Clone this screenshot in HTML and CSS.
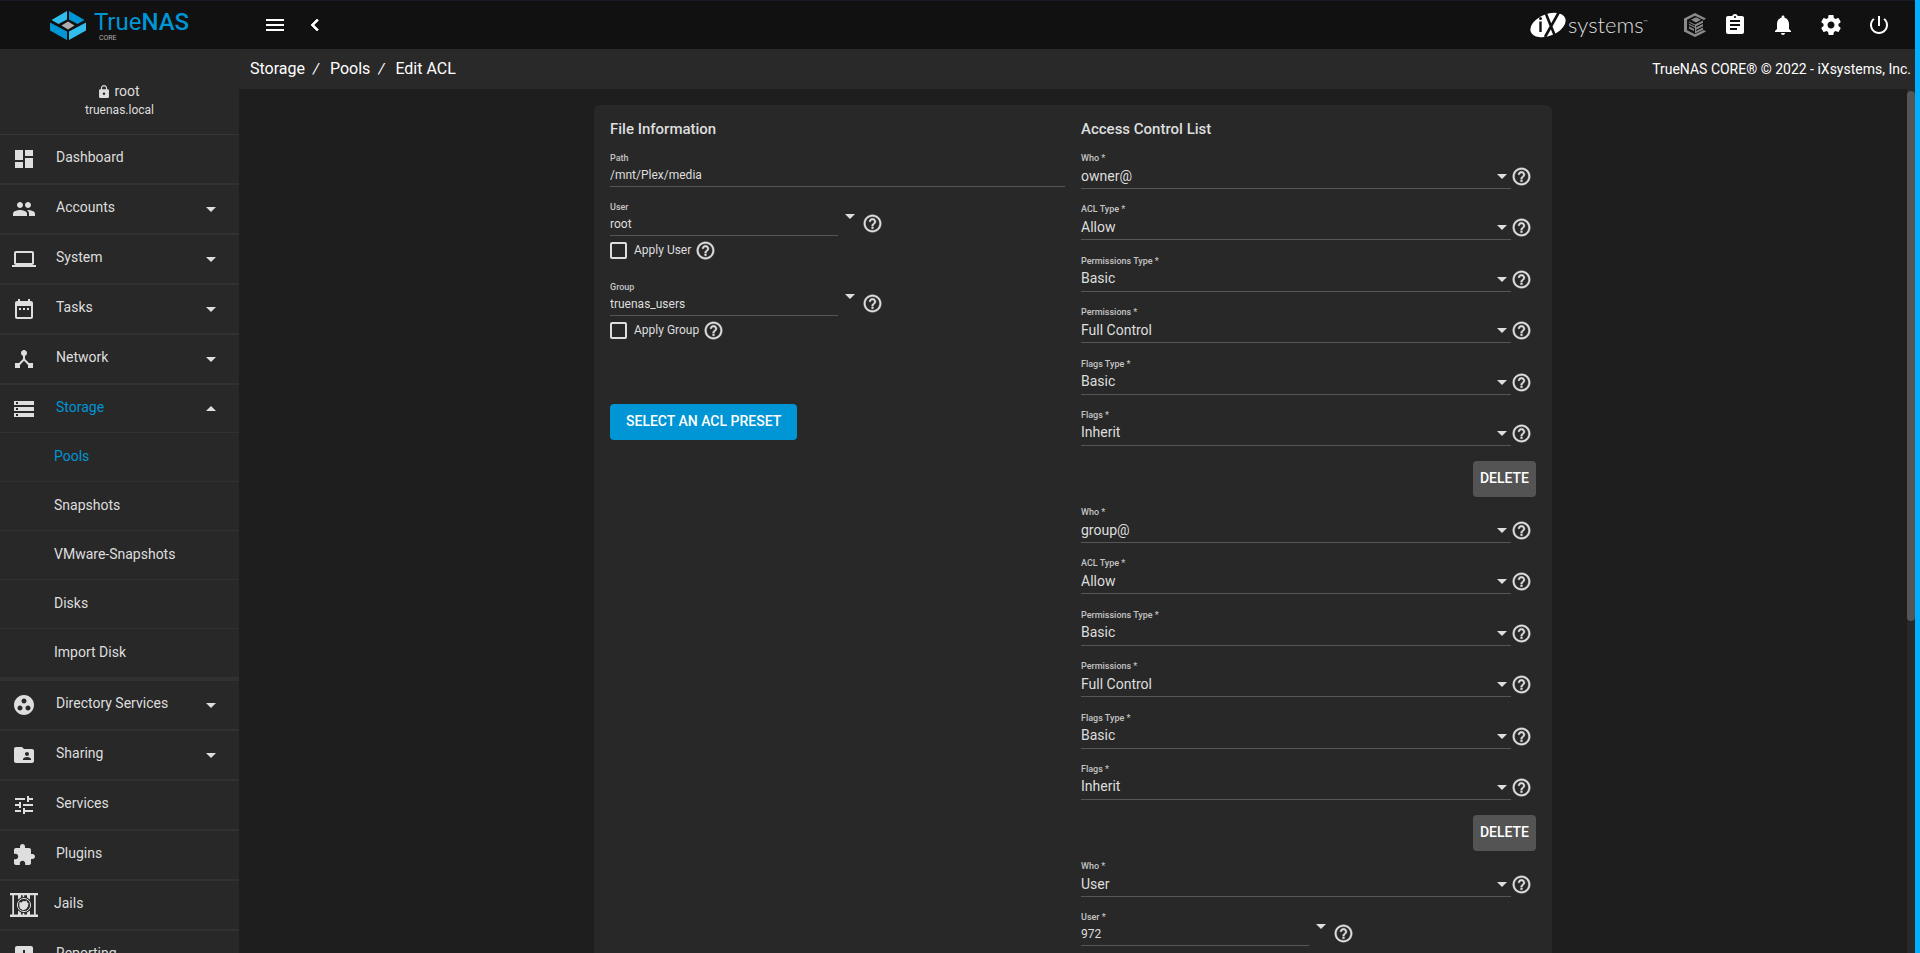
FILE: index.html
```html
<!DOCTYPE html>
<html lang="en">
<head>
<meta charset="utf-8">
<title>TrueNAS - Edit ACL</title>
<link rel="stylesheet" href="styles.css">
</head>
<body>
<svg class="sprite" aria-hidden="true">
  <symbol id="i-menu" viewBox="0 0 24 24"><path d="M3 18h18v-2H3v2zm0-5h18v-2H3v2zm0-7v2h18V6H3z"/></symbol>
  <symbol id="i-left" viewBox="0 0 24 24"><path d="M15.4 7.4 14 6l-6 6 6 6 1.4-1.4-4.6-4.6z" stroke="currentColor" stroke-width=".8"/></symbol>
  <symbol id="i-down" viewBox="7 10 10 5"><path d="M7 10l5 5 5-5z"/></symbol>
  <symbol id="i-up" viewBox="7 9 10 5"><path d="M7 14l5-5 5 5z"/></symbol>
  <symbol id="i-help" viewBox="0 0 24 24"><path d="M11 18h2v-2h-2v2zm1-16C6.480 2 2 6.480 2 12s4.480 10 10 10 10-4.480 10-10S17.520 2 12 2zm0 18c-4.410 0-8-3.590-8-8s3.590-8 8-8 8 3.590 8 8-3.590 8-8 8zm0-14c-2.210 0-4 1.790-4 4h2c0-1.100.9-2 2-2s2 .9 2 2c0 2-3 1.750-3 5h2c0-2.250 3-2.500 3-5 0-2.210-1.790-4-4-4z" stroke="currentColor" stroke-width=".4"/></symbol>
  <symbol id="i-lock" viewBox="4 1 16 21"><path d="M18 8h-1V6c0-2.760-2.240-5-5-5S7 3.240 7 6v2H6c-1.100 0-2 .9-2 2v10c0 1.100.9 2 2 2h12c1.100 0 2-.9 2-2V10c0-1.100-.9-2-2-2zm-6 9c-1.100 0-2-.9-2-2s.9-2 2-2 2 .9 2 2-.9 2-2 2zm3.100-9H8.900V6c0-1.710 1.390-3.100 3.100-3.100s3.100 1.390 3.100 3.100v2z"/></symbol>
  <symbol id="i-dashboard" viewBox="0 0 24 24"><path d="M3 13h8V3H3v10zm0 8h8v-6H3v6zm10 0h8V11h-8v10zm0-18v6h8V3h-8z"/></symbol>
  <symbol id="i-people" viewBox="0 0 24 24"><path d="M16 11c1.660 0 2.990-1.340 2.990-3S17.660 5 16 5s-3 1.340-3 3 1.340 3 3 3zm-8 0c1.660 0 2.990-1.340 2.990-3S9.660 5 8 5 5 6.340 5 8s1.340 3 3 3zm0 2c-2.330 0-7 1.170-7 3.500V19h14v-2.500c0-2.330-4.670-3.500-7-3.500zm8 0c-.29 0-.62.020-.97.050 1.160.84 1.970 1.970 1.970 3.450V19h6v-2.500c0-2.330-4.670-3.500-7-3.500z"/></symbol>
  <symbol id="i-laptop" viewBox="0 0 24 24"><path d="M20 18c1.100 0 2-.9 2-2V6c0-1.100-.9-2-2-2H4c-1.100 0-2 .9-2 2v10c0 1.100.9 2 2 2H0v2h24v-2h-4zM4 6h16v10H4V6z"/></symbol>
  <symbol id="i-tasks" viewBox="0 0 24 24"><path d="M9 11H7v2h2v-2zm4 0h-2v2h2v-2zm4 0h-2v2h2v-2zm2-7h-1V2h-2v2H8V2H6v2H5c-1.110 0-2 .9-2 2v14c0 1.100.89 2 2 2h14c1.100 0 2-.9 2-2V6c0-1.100-.9-2-2-2zm0 16H5V9h14v11z"/></symbol>
  <symbol id="i-network" viewBox="0 0 24 24"><path d="M17 16l-4-4V8.820C14.160 8.400 15 7.300 15 6c0-1.660-1.340-3-3-3S9 4.340 9 6c0 1.300.84 2.400 2 2.820V12l-4 4H3v5h5v-3.050l4-4.200 4 4.200V21h5v-5h-4z"/></symbol>
  <symbol id="i-storage" viewBox="0 0 24 24"><path d="M2 20h20v-4H2v4zm2-3h2v2H4v-2zM2 4v4h20V4H2zm4 3H4V5h2v2zm-4 7h20v-4H2v4zm2-3h2v2H4v-2z"/></symbol>
  <symbol id="i-directory" viewBox="0 0 24 24"><path d="M12 2C6.480 2 2 6.480 2 12s4.480 10 10 10 10-4.480 10-10S17.520 2 12 2zM8 17.500c-1.380 0-2.500-1.120-2.500-2.500s1.120-2.500 2.500-2.500 2.500 1.120 2.500 2.500-1.120 2.500-2.500 2.500zM9.500 8c0-1.380 1.120-2.500 2.500-2.500s2.500 1.120 2.500 2.500-1.120 2.500-2.500 2.500S9.500 9.380 9.500 8zm6.500 9.500c-1.380 0-2.500-1.120-2.500-2.500s1.120-2.500 2.500-2.500 2.500 1.120 2.500 2.500-1.120 2.500-2.500 2.500z"/></symbol>
  <symbol id="i-sharing" viewBox="0 0 24 24"><path d="M20 6h-8l-2-2H4c-1.100 0-1.990.9-1.990 2L2 18c0 1.100.9 2 2 2h16c1.100 0 2-.9 2-2V8c0-1.100-.9-2-2-2zm-5 3c1.100 0 2 .9 2 2s-.9 2-2 2-2-.9-2-2 .9-2 2-2zm4 8h-8v-1c0-1.330 2.670-2 4-2s4 .67 4 2v1z"/></symbol>
  <symbol id="i-services" viewBox="0 0 24 24"><path d="M3 17v2h6v-2H3zM3 5v2h10V5H3zm10 16v-2h8v-2h-8v-2h-2v6h2zM7 9v2H3v2h4v2h2V9H7zm14 4v-2H11v2h10zm-6-4h2V7h4V5h-4V3h-2v6z"/></symbol>
  <symbol id="i-plugins" viewBox="0 0 24 24"><path d="M20.500 11H19V7c0-1.100-.9-2-2-2h-4V3.500C13 2.120 11.880 1 10.500 1S8 2.120 8 3.500V5H4c-1.100 0-1.990.9-1.990 2v3.800H3.500c1.490 0 2.700 1.210 2.700 2.700s-1.210 2.700-2.700 2.700H2V20c0 1.100.9 2 2 2h3.800v-1.500c0-1.490 1.210-2.700 2.700-2.700 1.490 0 2.700 1.210 2.700 2.700V22H17c1.100 0 2-.9 2-2v-4h1.500c1.380 0 2.500-1.120 2.500-2.500S21.880 11 20.500 11z"/></symbol>
  <symbol id="i-jails" viewBox="0 0 28 24"><path d="M0 0h28v2.200H0zM0 21.600h28V24H0zM2.300 2.200H4v19.400H2.300zM8 2.200h3v19.400H8zM17 2.200h3v19.400h-3zM24 2.200h1.700v19.400H24zM12.700 2.200h1.500v19.400h-1.500z"/><circle cx="14" cy="12" r="8" fill="#282828"/><circle cx="14" cy="12" r="6.600" fill="none" stroke="currentColor" stroke-width="1"/><path d="M9.500 9l2 .4L13 8l2.500.3 1-1 .6 2.200 1.400.5-.5 3.500-2 2.800-3 .9-3-1.700-.8-3z"/></symbol>
  <symbol id="i-report" viewBox="0 0 24 24"><path d="M19 3H5c-1.100 0-2 .9-2 2v14c0 1.100.9 2 2 2h14c1.100 0 2-.9 2-2V5c0-1.100-.9-2-2-2zM9 17H7v-7h2v7zm4 0h-2V7h2v10zm4 0h-2v-4h2v4z"/></symbol>
  <symbol id="i-clipboard" viewBox="0 0 24 24"><path d="M19 3h-4.180C14.400 1.840 13.300 1 12 1c-1.300 0-2.400.84-2.820 2H5c-1.100 0-2 .9-2 2v14c0 1.100.9 2 2 2h14c1.100 0 2-.9 2-2V5c0-1.100-.9-2-2-2zm-7 0c.55 0 1 .45 1 1s-.45 1-1 1-1-.45-1-1 .45-1 1-1zm2 14H7v-2h7v2zm3-4H7v-2h10v2zm0-4H7V7h10v2z"/></symbol>
  <symbol id="i-bell" viewBox="0 0 24 24"><path d="M12 22c1.100 0 2-.9 2-2h-4c0 1.100.89 2 2 2zm6-6v-5c0-3.070-1.640-5.640-4.500-6.320V4c0-.83-.67-1.500-1.500-1.500s-1.500.67-1.500 1.500v.68C7.630 5.360 6 7.920 6 11v5l-2 2v1h16v-1l-2-2z"/></symbol>
  <symbol id="i-gear" viewBox="0 0 24 24"><path d="M19.430 12.980c.04-.32.070-.64.070-.98s-.03-.66-.07-.98l2.110-1.650c.19-.15.24-.42.12-.64l-2-3.460c-.12-.22-.39-.3-.61-.22l-2.490 1c-.52-.4-1.080-.73-1.690-.98l-.38-2.650C14.460 2.180 14.250 2 14 2h-4c-.25 0-.46.18-.49.42l-.38 2.650c-.61.25-1.170.59-1.690.98l-2.490-1c-.23-.09-.49 0-.61.22l-2 3.460c-.13.22-.07.49.12.64l2.110 1.650c-.04.32-.07.65-.07.98s.03.66.07.98l-2.110 1.650c-.19.15-.24.42-.12.64l2 3.460c.12.22.39.3.61.22l2.490-1c.52.4 1.080.73 1.690.98l.38 2.650c.03.24.24.42.49.42h4c.25 0 .46-.18.49-.42l.38-2.650c.61-.25 1.170-.59 1.690-.98l2.490 1c.23.09.49 0 .61-.22l2-3.460c.12-.22.07-.49-.12-.64l-2.110-1.650zM12 15.500c-1.930 0-3.500-1.570-3.500-3.500s1.570-3.500 3.500-3.500 3.500 1.570 3.500 3.500-1.570 3.500-3.500 3.500z"/></symbol>
  <symbol id="i-power" viewBox="0 0 24 24"><path d="M13 3h-2v10h2V3zm4.830 2.170l-1.420 1.420C17.990 7.860 19 9.810 19 12c0 3.870-3.130 7-7 7s-7-3.130-7-7c0-2.190 1.010-4.140 2.580-5.420L6.170 5.170C4.230 6.820 3 9.260 3 12c0 4.970 4.030 9 9 9s9-4.030 9-9c0-2.740-1.230-5.180-3.170-6.830z"/></symbol>
  <symbol id="i-command" viewBox="0 0 22 24"><path d="M11 0 22 5.500 20 7 11 2.800 2.600 7v10l8.400 4.300L20 17l2 1.500L11 24 0 18.500v-13z"/><path d="M0 5.500h3v13H0z"/><path d="M12 4.200l5 2.600-5 2.600-5-2.600zM5 8.500l6 3 8-4v2.200L12 13.200v1.300l7-3.500v2.200l-7 3.500v1.300l7-3.500v2.200L11 20.500V15l-6-3v-1.200l6 3v-1.300l-6-3z"/><path d="M5 13.400l5 2.500v2l-5-2.500z"/></symbol>
  <symbol id="i-truenas" viewBox="0 0 36 29"><path d="M17 0v8.500L8.500 13 1.500 9z" fill="#31beec"/><path d="M19 0v8.500l8.500 4.500 7-4z" fill="#0095d5"/><path d="M0 11.500 17 20.500V29L0 19.500z" fill="#0095d5"/><path d="M36 11.500 19 20.500V29l17-9.500z" fill="#31beec"/><path d="M18 10.500l6.500 4-6.500 4-6.500-4z" fill="#aeaeae"/></symbol>
  <symbol id="i-ix" viewBox="0 0 36 26"><ellipse cx="18" cy="13" rx="18.500" ry="10.800" transform="rotate(-22 18 13)" fill="#fff"/><path d="M10.500 9.500v10.500" stroke="#111" stroke-width="2.400"/><circle cx="10.500" cy="6.500" r="1.500" fill="#111"/><path d="M16 2l9 22M29 0 15 25" stroke="#111" stroke-width="2.600"/></symbol>
</svg>

<header class="topbar">
  <a class="brand" href="#" aria-label="TrueNAS CORE">
    <svg class="brand-mark"><use href="#i-truenas"/></svg>
    <span class="brand-text"><span class="brand-name">True<b>NAS</b></span><span class="brand-edition">CORE</span></span>
  </a>
  <div class="tools">
    <button type="button" class="icon-btn" aria-label="Toggle menu"><svg class="icon"><use href="#i-menu"/></svg></button>
    <button type="button" class="icon-btn narrow" aria-label="Collapse menu"><svg class="icon"><use href="#i-left"/></svg></button>
  </div>
  <div class="actions">
    <a class="vendor" href="#" aria-label="iXsystems"><svg class="vendor-mark"><use href="#i-ix"/></svg><span class="vendor-name">systems<sup>™</sup></span></a>
    <button type="button" class="icon-btn narrow muted" aria-label="TrueCommand"><svg class="icon"><use href="#i-command"/></svg></button>
    <button type="button" class="icon-btn" aria-label="Task manager"><svg class="icon"><use href="#i-clipboard"/></svg></button>
    <button type="button" class="icon-btn" aria-label="Alerts"><svg class="icon"><use href="#i-bell"/></svg></button>
    <button type="button" class="icon-btn" aria-label="Settings"><svg class="icon"><use href="#i-gear"/></svg></button>
    <button type="button" class="icon-btn" aria-label="Power"><svg class="icon"><use href="#i-power"/></svg></button>
  </div>
</header>

<div class="shell">
  <aside class="sidebar">
    <div class="account">
      <div class="account-user"><svg class="lock"><use href="#i-lock"/></svg>root</div>
      <div class="account-host">truenas.local</div>
    </div>
    <nav class="nav">
      <a class="nav-item" href="#"><svg class="icon"><use href="#i-dashboard"/></svg><span>Dashboard</span></a>
      <a class="nav-item" href="#"><svg class="icon"><use href="#i-people"/></svg><span>Accounts</span><svg class="caret"><use href="#i-down"/></svg></a>
      <a class="nav-item" href="#"><svg class="icon"><use href="#i-laptop"/></svg><span>System</span><svg class="caret"><use href="#i-down"/></svg></a>
      <a class="nav-item" href="#"><svg class="icon"><use href="#i-tasks"/></svg><span>Tasks</span><svg class="caret"><use href="#i-down"/></svg></a>
      <a class="nav-item" href="#"><svg class="icon"><use href="#i-network"/></svg><span>Network</span><svg class="caret"><use href="#i-down"/></svg></a>
      <a class="nav-item open" href="#"><svg class="icon"><use href="#i-storage"/></svg><span>Storage</span><svg class="caret"><use href="#i-up"/></svg></a>
      <div class="subnav">
        <a class="active" href="#">Pools</a>
        <a href="#">Snapshots</a>
        <a href="#">VMware-Snapshots</a>
        <a href="#">Disks</a>
        <a href="#">Import Disk</a>
      </div>
      <a class="nav-item" href="#"><svg class="icon"><use href="#i-directory"/></svg><span>Directory Services</span><svg class="caret"><use href="#i-down"/></svg></a>
      <a class="nav-item" href="#"><svg class="icon"><use href="#i-sharing"/></svg><span>Sharing</span><svg class="caret"><use href="#i-down"/></svg></a>
      <a class="nav-item" href="#"><svg class="icon"><use href="#i-services"/></svg><span>Services</span></a>
      <a class="nav-item" href="#"><svg class="icon"><use href="#i-plugins"/></svg><span>Plugins</span></a>
      <a class="nav-item wide" href="#"><svg class="icon"><use href="#i-jails"/></svg><span>Jails</span></a>
      <a class="nav-item" href="#"><svg class="icon"><use href="#i-report"/></svg><span>Reporting</span></a>
    </nav>
  </aside>

  <div class="page">
    <div class="crumbs">
      <nav class="trail"><a href="#">Storage</a><i>/</i><a href="#">Pools</a><i>/</i><a href="#">Edit ACL</a></nav>
      <div class="copyright">TrueNAS CORE® © 2022 - iXsystems, Inc.</div>
    </div>
    <div class="view">
      <main class="content">
        <form class="card">
          <section class="column">
            <h2>File Information</h2>
            <div class="field">
              <label for="path">Path</label>
              <input class="line" id="path" type="text" value="/mnt/Plex/media">
            </div>
            <div class="field">
              <label for="user">User</label>
              <div class="combo"><input class="line" id="user" type="text" value="root"><button type="button" class="drop" aria-label="Show users"><svg><use href="#i-down"/></svg></button><svg class="help"><use href="#i-help"/></svg></div>
            </div>
            <div class="check"><input type="checkbox" id="apply-user"><label for="apply-user">Apply User</label><svg class="help"><use href="#i-help"/></svg></div>
            <div class="field">
              <label for="group">Group</label>
              <div class="combo"><input class="line" id="group" type="text" value="truenas_users"><button type="button" class="drop" aria-label="Show groups"><svg><use href="#i-down"/></svg></button><svg class="help"><use href="#i-help"/></svg></div>
            </div>
            <div class="check"><input type="checkbox" id="apply-group"><label for="apply-group">Apply Group</label><svg class="help"><use href="#i-help"/></svg></div>
            <button type="button" class="btn primary">SELECT AN ACL PRESET</button>
          </section>

          <section class="column">
            <h2>Access Control List</h2>
            <div class="entry">
              <div class="entry-fields">
                <div class="field"><label for="who1">Who *</label><div class="pick"><select class="line" id="who1"><option>owner@</option></select><svg class="caret"><use href="#i-down"/></svg><svg class="help"><use href="#i-help"/></svg></div></div>
                <div class="field"><label for="type1">ACL Type *</label><div class="pick"><select class="line" id="type1"><option>Allow</option></select><svg class="caret"><use href="#i-down"/></svg><svg class="help"><use href="#i-help"/></svg></div></div>
                <div class="field"><label for="ptype1">Permissions Type *</label><div class="pick"><select class="line" id="ptype1"><option>Basic</option></select><svg class="caret"><use href="#i-down"/></svg><svg class="help"><use href="#i-help"/></svg></div></div>
                <div class="field"><label for="perm1">Permissions *</label><div class="pick"><select class="line" id="perm1"><option>Full Control</option></select><svg class="caret"><use href="#i-down"/></svg><svg class="help"><use href="#i-help"/></svg></div></div>
                <div class="field"><label for="ftype1">Flags Type *</label><div class="pick"><select class="line" id="ftype1"><option>Basic</option></select><svg class="caret"><use href="#i-down"/></svg><svg class="help"><use href="#i-help"/></svg></div></div>
                <div class="field"><label for="flags1">Flags *</label><div class="pick"><select class="line" id="flags1"><option>Inherit</option></select><svg class="caret"><use href="#i-down"/></svg><svg class="help"><use href="#i-help"/></svg></div></div>
              </div>
              <button type="button" class="btn delete">DELETE</button>
            </div>
            <div class="entry">
              <div class="entry-fields">
                <div class="field"><label for="who2">Who *</label><div class="pick"><select class="line" id="who2"><option>group@</option></select><svg class="caret"><use href="#i-down"/></svg><svg class="help"><use href="#i-help"/></svg></div></div>
                <div class="field"><label for="type2">ACL Type *</label><div class="pick"><select class="line" id="type2"><option>Allow</option></select><svg class="caret"><use href="#i-down"/></svg><svg class="help"><use href="#i-help"/></svg></div></div>
                <div class="field"><label for="ptype2">Permissions Type *</label><div class="pick"><select class="line" id="ptype2"><option>Basic</option></select><svg class="caret"><use href="#i-down"/></svg><svg class="help"><use href="#i-help"/></svg></div></div>
                <div class="field"><label for="perm2">Permissions *</label><div class="pick"><select class="line" id="perm2"><option>Full Control</option></select><svg class="caret"><use href="#i-down"/></svg><svg class="help"><use href="#i-help"/></svg></div></div>
                <div class="field"><label for="ftype2">Flags Type *</label><div class="pick"><select class="line" id="ftype2"><option>Basic</option></select><svg class="caret"><use href="#i-down"/></svg><svg class="help"><use href="#i-help"/></svg></div></div>
                <div class="field"><label for="flags2">Flags *</label><div class="pick"><select class="line" id="flags2"><option>Inherit</option></select><svg class="caret"><use href="#i-down"/></svg><svg class="help"><use href="#i-help"/></svg></div></div>
              </div>
              <button type="button" class="btn delete">DELETE</button>
            </div>
            <div class="entry">
              <div class="field"><label for="who3">Who *</label><div class="pick"><select class="line" id="who3"><option>User</option></select><svg class="caret"><use href="#i-down"/></svg><svg class="help"><use href="#i-help"/></svg></div></div>
              <div class="field"><label for="user3">User *</label><div class="combo"><input class="line" id="user3" type="text" value="972"><button type="button" class="drop" aria-label="Show users"><svg><use href="#i-down"/></svg></button><svg class="help"><use href="#i-help"/></svg></div></div>
            </div>
          </section>
        </form>
      </main>
      <div class="scroll-track"><div class="scroll-thumb"></div></div>
    </div>
  </div>
</div>
</body>
</html>
```
FILE: styles.css
```css
* { box-sizing: border-box; }

body {
  margin: 0;
  height: 100vh;
  display: flex;
  flex-direction: column;
  overflow: hidden;
  border-right: 5px solid #00adff;
  background: #1e1e1e;
  color: #dedede;
  font: 14px/18px Roboto, "Liberation Sans", sans-serif;
}

a { color: inherit; text-decoration: none; }
svg { display: block; flex: none; fill: currentColor; }
button, input, select { font: inherit; color: inherit; }
button { border: 0; padding: 0; background: none; cursor: pointer; }

.sprite { display: none; }
.icon { width: 24px; height: 24px; }
.caret { width: 10px; height: 5px; }
.help { width: 21px; height: 21px; }

/* Top bar */
.topbar {
  flex: none;
  display: flex;
  align-items: center;
  height: 49px;
  border-top: 1px solid #191925;
  background: #111;
  color: #fff;
}
.brand {
  width: 239px;
  display: flex;
  justify-content: center;
  align-items: center;
  gap: 8px;
}
.brand-mark { width: 36px; height: 29px; }
.brand-text { display: flex; flex-direction: column; color: #0095d5; }
.brand-name { font-size: 24px; line-height: 26px; }
.brand-name b { font-weight: 500; }
.brand-edition { padding-left: 5px; font-size: 7px; line-height: 6px; color: #aaa; }
.tools { display: flex; padding-left: 12px; }
.icon-btn { width: 48px; display: flex; justify-content: center; }
.icon-btn.narrow { width: 32px; }
.icon-btn.muted { color: #8a8a8a; }
.actions { display: flex; align-items: center; margin-left: auto; padding-right: 12px; }
.vendor { display: flex; align-items: center; gap: 2px; margin-right: 31px; }
.vendor-mark { width: 36px; height: 26px; overflow: visible; }
.vendor-name { font: 300 22px/26px Lato, sans-serif; color: #ddd; }
.vendor-name sup { font-size: 6px; line-height: 6px; vertical-align: 9px; }

/* Sidebar */
.shell { flex: 1; min-height: 0; display: flex; }
.sidebar { flex: none; width: 239px; overflow: hidden; background: #282828; }
.account {
  display: flex;
  flex-direction: column;
  align-items: center;
  height: 86px;
  padding-top: 33px;
  border-bottom: 1px solid #353535;
}
.account-user { display: flex; align-items: center; gap: 5px; }
.lock { width: 10px; height: 13px; }
.account-host { font-size: 12px; line-height: 20px; }
.nav-item {
  display: flex;
  align-items: center;
  height: 50px;
  padding: 0 23px 0 12px;
  border-bottom: 2px solid #313131;
}
.nav-item span { flex: 1; margin-left: 20px; padding-bottom: 4px; }
.nav-item.open { height: 48px; border-bottom-width: 1px; }
.nav-item.open span, .subnav .active { color: #0095d5; }
.nav-item.wide { padding-left: 10px; }
.nav-item.wide .icon { width: 28px; }
.nav-item.wide span { margin-left: 16px; }
.subnav { border-bottom: 3px solid #313131; }
.subnav a {
  display: block;
  height: 49px;
  padding: 14px 0 0 54px;
  border-bottom: 1px solid #313131;
}

/* Page header */
.page { flex: 1; min-width: 0; display: flex; flex-direction: column; }
.crumbs {
  flex: none;
  display: flex;
  justify-content: space-between;
  align-items: center;
  height: 40px;
  padding: 0 4px 0 11px;
  background: #292929;
  color: #fff;
}
.trail { display: flex; font-size: 16px; }
.trail i { width: 25px; padding-left: 8px; font-size: 15px; }

/* ACL form */
.view { flex: 1; min-height: 0; display: flex; }
.content { flex: 1; overflow: hidden; padding-top: 16px; }
.scroll-track {
  flex: none;
  display: grid;
  grid-template-rows: 8fr 5fr;
  width: 8px;
  padding-top: 2px;
  background: #282828;
}
.scroll-thumb { border-radius: 4px; background: #555; }
.card {
  display: grid;
  grid-template-columns: 1fr 1fr;
  gap: 16px;
  width: 100%;
  max-width: 958px;
  margin: 0 auto;
  padding: 16px;
  border-radius: 6px;
  background: #282828;
  min-height: 100%;
}
.column { display: flex; flex-direction: column; }
h2 { margin: 0 0 15px; font-size: 15px; line-height: 16px; font-weight: 500; }
.field { display: flex; flex-direction: column; }
.field label { font-size: 9px; line-height: 12px; font-weight: 500; color: #c4c4c4; }
.field + .field { margin-top: 14px; }
.line {
  width: 100%;
  height: 23px;
  padding: 0 0 1px;
  border: 0;
  border-bottom: 1px solid #565656;
  border-radius: 0;
  background: transparent;
  outline: 0;
  appearance: none;
  font-size: 12px;
}
select.line { height: 25px; font-size: 14px; }
.combo { display: flex; }
.combo .line { width: 50%; }
.drop { width: 24px; height: 6px; display: flex; justify-content: center; align-items: end; }
.drop svg { width: 10px; height: 5px; }
.pick { display: grid; grid-template-columns: 1fr 21px; align-items: center; padding-right: 4px; }
.pick .line { grid-area: 1 / 1; }
.pick .caret { grid-area: 1 / 1; justify-self: end; margin-right: 4px; pointer-events: none; }
.check { display: flex; align-items: center; height: 18px; margin-top: 5px; font-size: 12px; }
.check input {
  appearance: none;
  width: 17px;
  height: 17px;
  margin: 0 7px 0 0;
  border: 2px solid #dedede;
  border-radius: 2px;
}
.check label { margin-right: 4px; }
.check + .field { margin-top: 22px; }
.entry-fields {
  display: flex;
  flex-direction: column;
  justify-content: space-between;
  min-height: 294px;
}
.entry-fields .field + .field { margin-top: 0; }
.btn {
  align-self: flex-start;
  height: 36px;
  padding: 0 16px 2px;
  border-radius: 4px;
  font-weight: 500;
  color: #fff;
}
.primary { margin-top: 65px; background: #0095d5; }
.entry { display: flex; flex-direction: column; margin-bottom: 9px; }
.delete { align-self: flex-end; margin-top: 15px; padding: 0 7px 2px; background: #545454; }
```
